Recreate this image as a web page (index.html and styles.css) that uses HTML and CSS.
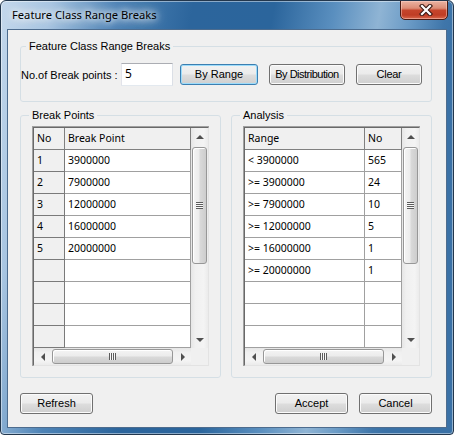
FILE: index.html
```html
<!DOCTYPE html>
<html>
<head>
<meta charset="utf-8">
<title>Feature Class Range Breaks</title>
<link rel="stylesheet" href="styles.css">
</head>
<body>
<div class="window">
  <div class="titlebar">
    <span class="title">Feature Class Range Breaks</span>
    <div class="close">
      <svg width="14" height="12" viewBox="0 0 14 12"><path d="M3 2 L11 10 M11 2 L3 10" stroke="#3b1a14" stroke-width="4.4" stroke-linecap="square" fill="none"/><path d="M3 2 L11 10 M11 2 L3 10" stroke="#ffffff" stroke-width="2.2" stroke-linecap="square" fill="none"/></svg>
    </div>
  </div>
  <div class="client">
    <fieldset class="group top-group">
      <legend>Feature Class Range Breaks</legend>
      <div class="ctrl-row">
        <span class="lbl">No.of Break points :</span>
        <div class="textbox">5</div>
        <div class="btn btn-focus w78">By Range</div>
        <div class="btn w76">By Distribution</div>
        <div class="btn w66">Clear</div>
      </div>
    </fieldset>

    <div class="panels">
      <fieldset class="group panel">
        <legend>Break Points</legend>
        <div class="grid">
          <div class="grid-inner">
            <div class="rows bp">
              <div class="gr head"><div class="c hc">No</div><div class="c hc">Break Point</div></div>
              <div class="gr"><div class="c rc">1</div><div class="c">3900000</div></div>
              <div class="gr"><div class="c rc">2</div><div class="c">7900000</div></div>
              <div class="gr"><div class="c rc">3</div><div class="c">12000000</div></div>
              <div class="gr"><div class="c rc">4</div><div class="c">16000000</div></div>
              <div class="gr"><div class="c rc">5</div><div class="c">20000000</div></div>
              <div class="gr"><div class="c rc"></div><div class="c"></div></div>
              <div class="gr"><div class="c rc"></div><div class="c"></div></div>
              <div class="gr"><div class="c rc"></div><div class="c"></div></div>
              <div class="gr"><div class="c rc"></div><div class="c"></div></div>
            </div>
            <div class="vscroll">
              <div class="arrow"><span class="tri-up"></span></div>
              <div class="vthumb"><span class="vgrip"></span></div>
              <div class="track"></div>
              <div class="arrow"><span class="tri-down"></span></div>
            </div>
            <div class="hscroll">
              <div class="harrow"><span class="tri-left"></span></div>
              <div class="hthumb"><span class="hgrip"></span></div>
              <div class="track"></div>
              <div class="harrow"><span class="tri-right"></span></div>
            </div>
            <div class="corner"></div>
          </div>
        </div>
      </fieldset>

      <fieldset class="group panel">
        <legend>Analysis</legend>
        <div class="grid">
          <div class="grid-inner">
            <div class="rows an">
              <div class="gr head"><div class="c hc">Range</div><div class="c hc">No</div></div>
              <div class="gr"><div class="c">&lt; 3900000</div><div class="c">565</div></div>
              <div class="gr"><div class="c">&gt;= 3900000</div><div class="c">24</div></div>
              <div class="gr"><div class="c">&gt;= 7900000</div><div class="c">10</div></div>
              <div class="gr"><div class="c">&gt;= 12000000</div><div class="c">5</div></div>
              <div class="gr"><div class="c">&gt;= 16000000</div><div class="c">1</div></div>
              <div class="gr"><div class="c">&gt;= 20000000</div><div class="c">1</div></div>
              <div class="gr"><div class="c"></div><div class="c"></div></div>
              <div class="gr"><div class="c"></div><div class="c"></div></div>
              <div class="gr"><div class="c"></div><div class="c"></div></div>
            </div>
            <div class="vscroll">
              <div class="arrow"><span class="tri-up"></span></div>
              <div class="vthumb"><span class="vgrip"></span></div>
              <div class="track"></div>
              <div class="arrow"><span class="tri-down"></span></div>
            </div>
            <div class="hscroll">
              <div class="harrow"><span class="tri-left"></span></div>
              <div class="hthumb"><span class="hgrip"></span></div>
              <div class="track"></div>
              <div class="harrow"><span class="tri-right"></span></div>
            </div>
            <div class="corner"></div>
          </div>
        </div>
      </fieldset>
    </div>

    <div class="footer">
      <div class="btn w73">Refresh</div>
      <div class="btn w73 push">Accept</div>
      <div class="btn w73">Cancel</div>
    </div>
  </div>
</div>
</body>
</html>
```

FILE: styles.css
```css
* { box-sizing: border-box; }
html, body { margin: 0; padding: 0; }
body {
  width: 454px;
  height: 435px;
  background: #ffffff;
  font-family: "Liberation Sans", Arial, sans-serif;
  font-size: 11px;
  color: #000;
}

.window {
  width: 454px;
  height: 435px;
  border: 1px solid #23374d;
  border-radius: 6px 6px 4px 4px;
  background: linear-gradient(100deg, #c4d8ec 0px, #a8c5e1 50px, #4d83b6 115px, #2c659c 190px, #2b659c 270px, #5a8fbf 330px, #8fb4d4 375px, #6b9bc6 405px, #3f76aa 440px, #3a71a6 454px);
  box-shadow: inset 0 0 0 1px rgba(255,255,255,0.45);
  display: flex;
  flex-direction: column;
  overflow: hidden;
}

.titlebar {
  flex: none;
  height: 28px;
  display: flex;
  justify-content: space-between;
  align-items: flex-start;
  padding-left: 11px;
  padding-right: 5px;
}
.title {
  font-family: "Noto Sans", "DejaVu Sans", sans-serif;
  font-size: 11.2px;
  line-height: 28px;
  color: #000;
  text-shadow: 0 0 6px #fff, 0 0 10px #fff, 0 0 14px rgba(255,255,255,0.9);
}
.close {
  width: 48px;
  height: 20px;
  margin-top: -1px;
  border: 1px solid #4a1b13;
  border-radius: 0 0 5px 5px;
  background: linear-gradient(#eab3a2 0%, #dc8c76 40%, #c5452c 52%, #bf3d25 78%, #d8684c 100%);
  box-shadow: inset 0 0 0 1px rgba(255,220,210,0.45);
  display: flex;
  align-items: center;
  justify-content: center;
  padding-left: 3px;
}

.client {
  flex: none;
  margin: 0 6px;
  height: 399px;
  border: 1px solid #4d6c8e;
  background: #f0f0f0;
  padding: 10px 14px 0 12px;
}

.group {
  margin: 0;
  padding: 0;
  min-width: 0;
  border: 1px solid #d5dfe5;
  border-radius: 3px;
}
.group legend {
  font-family: "Liberation Sans", Arial, sans-serif;
  font-size: 11px;
  line-height: 13px;
  padding: 0 3px;
  margin-left: 5px;
  color: #000;
}

.top-group { padding-bottom: 15px; }
.ctrl-row {
  margin-top: 10px;
  height: 23px;
  display: flex;
  align-items: center;
}
.lbl { width: 100px; white-space: nowrap; }
.textbox {
  width: 52px;
  height: 23px;
  background: #fff;
  border: 1px solid;
  border-color: #abadb3 #dbdfe6 #e3e9ef #e2e3ea;
  padding-left: 3px;
  font-family: "Noto Sans", sans-serif;
  font-size: 12px;
  line-height: 20px;
}

.btn {
  height: 21px;
  border: 1px solid #707070;
  border-radius: 3px;
  background: linear-gradient(#f2f2f2 0%, #ebebeb 48%, #dddddd 52%, #cfcfcf 100%);
  box-shadow: inset 0 0 0 1px #fbfbfb;
  font-family: "Liberation Sans", Arial, sans-serif;
  font-size: 11px;
  line-height: 19px;
  text-align: center;
  white-space: nowrap;
  color: #000;
}
.btn-focus {
  border-color: #3c7fb1;
  box-shadow: inset 0 0 0 1px #9ddcfb;
  margin-left: 7px;
}
.w78 { width: 78px; }
.w76 { width: 76px; margin-left: 11px; letter-spacing: -0.5px; }
.w66 { width: 66px; margin-left: 11px; letter-spacing: -0.3px; }
.w73 { width: 73px; }

.panels {
  margin-top: 7px;
  display: flex;
  gap: 10px;
}
.panel {
  width: 201px;
  height: 269px;
  padding: 4px 11px 11px 0;
}
.panel legend { margin-left: 8px; }

.grid {
  width: 177px;
  height: 240px;
  margin-left: 11px;
  border-top: 1px solid #a0a0a0;
  border-left: 1px solid #a0a0a0;
}
.grid-inner {
  width: 100%;
  height: 100%;
  border-top: 1px solid #696969;
  border-left: 1px solid #696969;
  border-right: 1px solid #e3e3e3;
  border-bottom: 1px solid #e3e3e3;
  background: #fff;
  display: grid;
  grid-template-columns: 1fr 17px;
  grid-template-rows: 1fr 17px;
}

.rows {
  overflow: hidden;
  font-family: "Noto Sans", "DejaVu Sans", sans-serif;
  font-size: 10.5px;
}
.gr {
  display: grid;
  height: 22px;
}
.bp .gr { grid-template-columns: 31px 1fr; }
.an .gr { grid-template-columns: 120px 1fr; }
.c {
  border-right: 1px solid #a0a0a0;
  border-bottom: 1px solid #a0a0a0;
  padding-left: 3px;
  line-height: 21px;
  white-space: nowrap;
  overflow: hidden;
  color: #000;
}
.hc {
  background: #f0f0f0;
  border-color: #808080;
}
.rc {
  background: #f0f0f0;
  border-color: #7a7a7a;
}

.vscroll {
  display: flex;
  flex-direction: column;
  background: linear-gradient(to right, #e6e6e6, #f0f0f0 25%, #f4f4f4 75%, #ebebeb);
}
.arrow {
  height: 17px;
  flex: none;
  display: flex;
  align-items: center;
  justify-content: center;
}
.track { flex: 1; }
.vthumb {
  flex: none;
  height: 117px;
  margin: 2px 1px 0 1px;
  border: 1px solid #979797;
  border-radius: 3px;
  background: linear-gradient(to right, #f4f4f4 0%, #ececec 45%, #d9d9d9 55%, #cdcdcd 100%);
  box-shadow: inset 1px 1px 0 #fff;
  display: flex;
  align-items: center;
  justify-content: center;
}
.vgrip {
  width: 7px;
  height: 7px;
  background: repeating-linear-gradient(#5c5c5c 0 1px, #f8f8f8 1px 2px);
}
.tri-up {
  width: 0; height: 0;
  border-left: 4px solid transparent;
  border-right: 4px solid transparent;
  border-bottom: 4px solid #505050;
}
.tri-down {
  width: 0; height: 0;
  border-left: 4px solid transparent;
  border-right: 4px solid transparent;
  border-top: 4px solid #505050;
}

.hscroll {
  display: flex;
  background: linear-gradient(#e6e6e6, #f0f0f0 25%, #f4f4f4 75%, #ebebeb);
}
.harrow {
  width: 17px;
  flex: none;
  display: flex;
  align-items: center;
  justify-content: center;
}
.hthumb {
  flex: none;
  width: 121px;
  margin: 1px 0 1px 1px;
  border: 1px solid #979797;
  border-radius: 3px;
  background: linear-gradient(#f4f4f4 0%, #ececec 45%, #d9d9d9 55%, #cdcdcd 100%);
  box-shadow: inset 1px 1px 0 #fff;
  display: flex;
  align-items: center;
  justify-content: center;
}
.hgrip {
  width: 7px;
  height: 7px;
  background: repeating-linear-gradient(to right, #5c5c5c 0 1px, #f8f8f8 1px 2px);
}
.tri-left {
  width: 0; height: 0;
  border-top: 4px solid transparent;
  border-bottom: 4px solid transparent;
  border-right: 4px solid #505050;
}
.tri-right {
  width: 0; height: 0;
  border-top: 4px solid transparent;
  border-bottom: 4px solid transparent;
  border-left: 4px solid #505050;
}
.corner { background: #f0f0f0; }

.footer {
  margin-top: 15px;
  display: flex;
}
.footer .btn + .btn { margin-left: 11px; }
.footer .push { margin-left: auto !important; }
```
